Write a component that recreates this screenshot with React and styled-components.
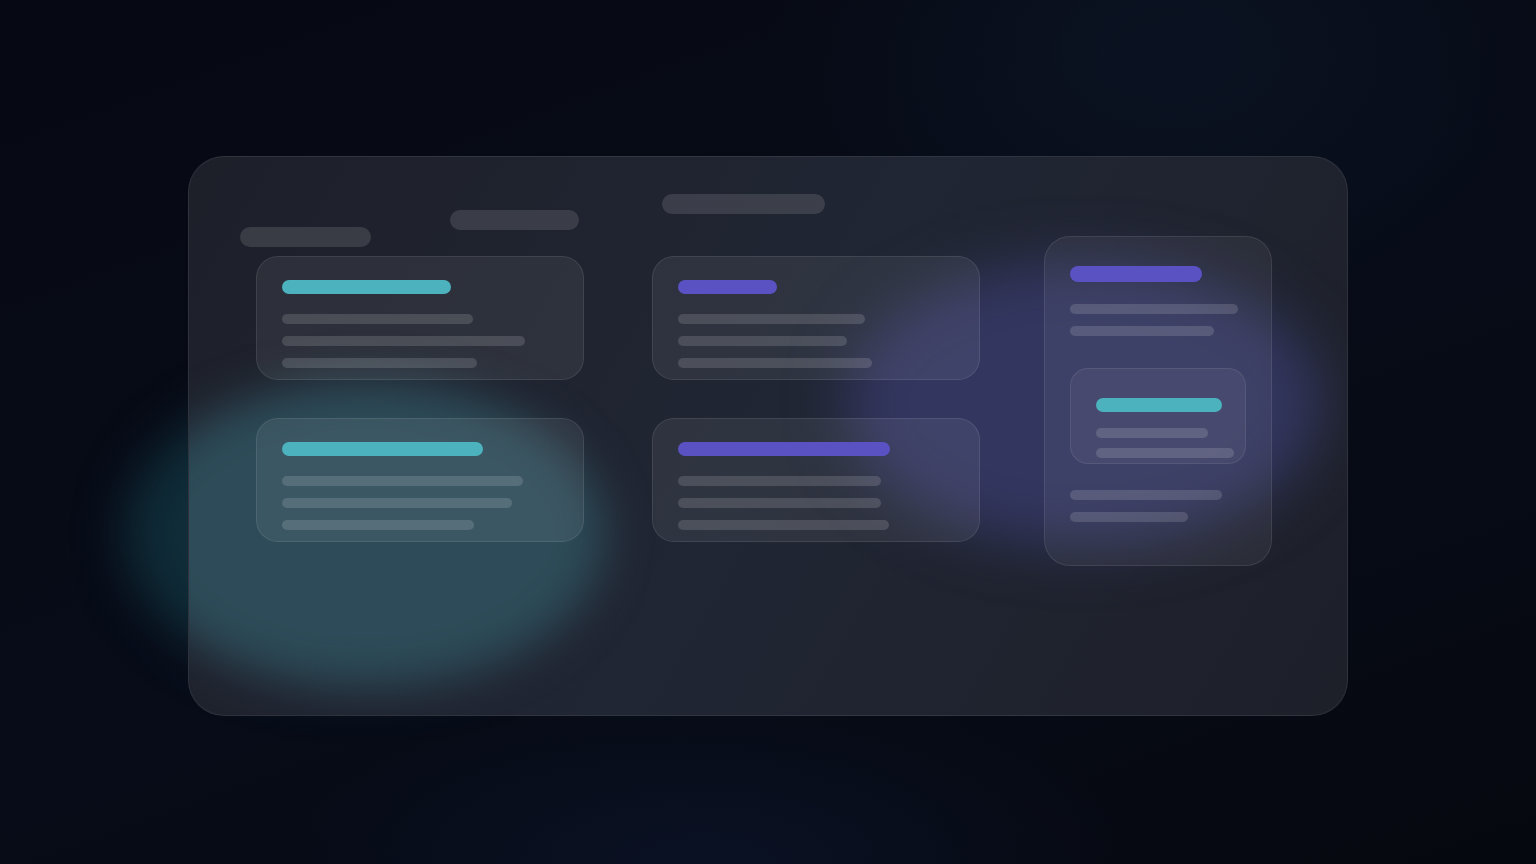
import React from 'react'
import styled, { createGlobalStyle } from 'styled-components'

const GlobalStyle = createGlobalStyle`
  html, body {
    margin: 0;
    padding: 0;
    background: #05080f;
    font-family: Inter, "Liberation Sans", sans-serif;
  }
`

const Stage = styled.div`
  position: relative;
  width: 1536px;
  height: 864px;
  overflow: hidden;
  display: flex;
  justify-content: center;
  align-items: flex-start;
  padding-top: 156px;
  box-sizing: border-box;
  background:
    radial-gradient(ellipse 560px 380px at 76% 6%, rgba(16, 28, 48, 0.45), transparent 70%),
    radial-gradient(ellipse 620px 240px at 46% 100%, rgba(14, 24, 50, 0.55), transparent 70%),
    linear-gradient(160deg, #060913 0%, #070c18 55%, #05080f 100%);
`

// dim glow that leaks out past the panel's left edge
const Glow = styled.div`
  position: absolute;
  left: 125px;
  top: 378px;
  width: 480px;
  height: 310px;
  border-radius: 50%;
  background: #0f2c38;
  filter: blur(24px);
`

const Panel = styled.div`
  position: relative;
  width: 1160px;
  height: 560px;
  box-sizing: border-box;
  border-radius: 36px;
  border: 1px solid rgba(255, 255, 255, 0.08);
  overflow: hidden;
  display: flex;
  padding: 37px 0 0 51px;
  background: linear-gradient(120deg, #1d2029 0%, #212634 50%, #1d2029 100%);
`

const Blob = styled.div`
  position: absolute;
  left: ${p => p.$x}px;
  top: ${p => p.$y}px;
  width: ${p => p.$w}px;
  height: ${p => p.$h}px;
  border-radius: 50%;
  background: ${p => p.$color};
  filter: blur(${p => p.$blur}px);
  pointer-events: none;
`

const Main = styled.div`
  position: relative;
  display: flex;
  flex-direction: column;
  width: 740px;
`

const Header = styled.div`
  display: flex;
  align-items: flex-start;
  height: 53px;
`

const Pill = styled.div`
  width: ${p => p.$w}px;
  height: 20px;
  margin-top: ${p => p.$top}px;
  margin-left: ${p => p.$left}px;
  border-radius: 10px;
  background: rgba(255, 255, 255, 0.12);
`

const Grid = styled.div`
  display: grid;
  grid-template-columns: 328px 328px;
  column-gap: 68px;
  row-gap: 38px;
  margin: 9px 0 0 16px;
`

const Card = styled.div`
  height: 124px;
  box-sizing: border-box;
  padding: 23px 25px 0;
  border-radius: 22px;
  border: 1px solid rgba(255, 255, 255, 0.09);
  background: rgba(255, 255, 255, 0.065);
  display: flex;
  flex-direction: column;
`

const Accent = styled.div`
  width: ${p => p.$w}px;
  height: ${p => p.$h || 14}px;
  border-radius: 8px;
  background: ${p => (p.$tone === 'teal' ? '#4bb2be' : '#5a51c3')};
  flex-shrink: 0;
`

const Lines = styled.div`
  display: flex;
  flex-direction: column;
  gap: ${p => p.$gap}px;
  margin-top: ${p => p.$top}px;
`

const Line = styled.div`
  width: ${p => p.$w}px;
  height: 10px;
  border-radius: 5px;
  background: rgba(255, 255, 255, 0.14);
`

const Side = styled.div`
  position: relative;
  margin: 42px 0 0 64px;
  width: 228px;
  height: 330px;
  box-sizing: border-box;
  padding: 29px 25px 0;
  border-radius: 26px;
  border: 1px solid rgba(255, 255, 255, 0.09);
  background: rgba(255, 255, 255, 0.055);
  display: flex;
  flex-direction: column;
`

const Nested = styled.div`
  width: 176px;
  height: 96px;
  box-sizing: border-box;
  margin-top: 32px;
  padding: 29px 25px 0;
  border-radius: 18px;
  border: 1px solid rgba(255, 255, 255, 0.08);
  background: rgba(255, 255, 255, 0.05);
  display: flex;
  flex-direction: column;
`

const cards = [
  { tone: 'teal', accent: 169, lines: [191, 243, 195] },
  { tone: 'purple', accent: 99, lines: [187, 169, 194] },
  { tone: 'teal', accent: 201, lines: [241, 230, 192] },
  { tone: 'purple', accent: 212, lines: [203, 203, 211] },
]

const TaskCard = ({ tone, accent, lines }) => (
  <Card>
    <Accent $tone={tone} $w={accent} />
    <Lines $gap={12} $top={20}>
      {lines.map((w, i) => <Line key={i} $w={w} />)}
    </Lines>
  </Card>
)

export default function App() {
  return (
    <>
      <GlobalStyle />
      <Stage>
        <Glow />
        <Panel>
          <Blob $x={-62} $y={224} $w={478} $h={306} $color="#2d4b58" $blur={22} />
          <Blob $x={656} $y={104} $w={476} $h={284} $color="#33365f" $blur={28} />
          <Main>
            <Header>
              <Pill $w={131} $top={33} $left={0} />
              <Pill $w={129} $top={16} $left={79} />
              <Pill $w={163} $top={0} $left={83} />
            </Header>
            <Grid>
              {cards.map((c, i) => <TaskCard key={i} {...c} />)}
            </Grid>
          </Main>
          <Side>
            <Accent $tone="purple" $w={132} $h={16} />
            <Lines $gap={12} $top={22}>
              <Line $w={168} />
              <Line $w={144} />
            </Lines>
            <Nested>
              <Accent $tone="teal" $w={126} />
              <Lines $gap={10} $top={16}>
                <Line $w={112} />
                <Line $w={138} />
              </Lines>
            </Nested>
            <Lines $gap={12} $top={26}>
              <Line $w={152} />
              <Line $w={118} />
            </Lines>
          </Side>
        </Panel>
      </Stage>
    </>
  )
}
